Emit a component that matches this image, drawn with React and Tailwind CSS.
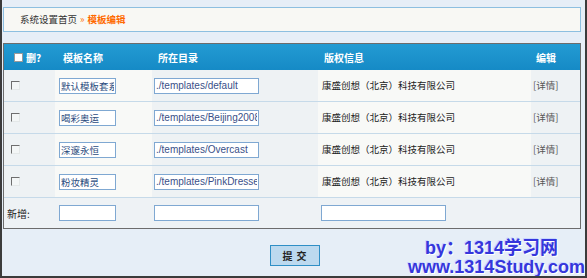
import React from "react";

const cjk = { fontFamily: '"Noto Sans CJK SC", "Liberation Sans", sans-serif' };
const arial = { fontFamily: '"Liberation Sans", "Noto Sans CJK SC", sans-serif' };

const rows = [
  { name: "默认模板套系", path: "./templates/default" },
  { name: "喝彩奥运", path: "./templates/Beijing2008" },
  { name: "深邃永恒", path: "./templates/Overcast" },
  { name: "粉妆精灵", path: "./templates/PinkDresses" },
];

function OldCheck() {
  return (
    <span className="block w-[9px] h-[9px] border-t border-l border-t-[#6e6e6e] border-l-[#6e6e6e] border-b border-r border-b-[#e4e8e8] border-r-[#e4e8e8] bg-[#f3f6f6]" />
  );
}

function Field({ value, w }) {
  return (
    <input
      readOnly
      defaultValue={value}
      className={`${w} h-[16px] border border-[#7fa8d2] bg-white px-[1px] text-[9.5px] leading-[14px] text-[#2b4c7e] outline-none`}
      style={cjk}
    />
  );
}

export default function App() {
  return (
    <div
      className="relative w-[587px] h-[278px] overflow-hidden border-l-2 border-r-2 border-b-2 border-[#3b3b3b] bg-[#e6eef7] text-[9.5px]"
      style={cjk}
    >
      <div className="pl-[1px] pt-[7px]">
        <div className="flex h-[25px] w-[578px] items-center border border-[#8dbfe0] bg-[#f8f8f4] pl-[16px] text-[9.5px] text-[#333]">
          <span>系统设置首页</span>
          <span className="ml-[3px] text-[#ff6a00]">»</span>
          <span className="ml-[3px] font-bold text-[#ff6a00]">模板编辑</span>
        </div>

        <div className="mt-[11px] w-[578px] border border-[#6c6c6c] bg-[#eef2f5]">
          {/* header */}
          <div className="flex h-[26px] items-center bg-gradient-to-b from-[#239bd3] to-[#158ac6] text-[10px] font-bold text-white">
            <div className="flex w-[51px] items-center pl-[10px]">
              <span className="block h-[9px] w-[9px] border border-[#9a9a9a] bg-white" />
              <span className="ml-[3px]">删?</span>
            </div>
            <div className="w-[97px] pl-[8px]">模板名称</div>
            <div className="w-[166px] pl-[6px]">所在目录</div>
            <div className="w-[213px] pl-[6px]">版权信息</div>
            <div className="w-[49px] pl-[5px]">编辑</div>
          </div>

          {rows.map((r) => (
            <div key={r.path} className="flex h-[32px] border-b border-[#c6dae9]">
              <div className="flex w-[51px] items-center bg-[#eef2f4] pl-[7px]">
                <OldCheck />
              </div>
              <div className="flex w-[97px] items-center bg-[#f8f9f7] pl-[4px]">
                <Field value={r.name} w="w-[57px]" />
              </div>
              <div className="flex w-[166px] items-center bg-[#eef2f4] pl-[2px]">
                <input
                  readOnly
                  defaultValue={r.path}
                  className="h-[16px] w-[105px] border border-[#7fa8d2] bg-white px-[1px] text-[10px] leading-[14px] text-[#3a4f88] outline-none"
                  style={arial}
                />
              </div>
              <div className="flex w-[213px] items-center bg-[#f8f9f7] pl-[4px] text-[#222]">
                康盛创想（北京）科技有限公司
              </div>
              <div className="flex w-[49px] items-center bg-[#eef2f4] pl-[2px] text-[#555]">
                [详情]
              </div>
            </div>
          ))}

          <div className="flex h-[30px] items-center">
            <div className="w-[51px] pl-[3px] text-[10px] text-[#222]">新增:</div>
            <div className="w-[97px] pl-[4px]">
              <Field value="" w="w-[57px]" />
            </div>
            <div className="w-[166px] pl-[2px]">
              <Field value="" w="w-[105px]" />
            </div>
            <div className="w-[213px] pl-[3px]">
              <Field value="" w="w-[125px]" />
            </div>
            <div className="w-[49px]" />
          </div>
        </div>

        <div className="mt-[16px] flex w-[583px] justify-center">
          <button className="h-[21px] w-[50px] border border-[#2f8fc6] bg-[#bcd9ef] pl-[4px] text-[10px] font-bold tracking-[4px] text-[#222]">
            提交
          </button>
        </div>
      </div>

      <div
        className="absolute left-[423px] top-[237px] whitespace-nowrap text-[18px] font-bold leading-[22px] text-[#3636dc] [text-shadow:1px_1px_0_#ffffff,-1px_-1px_0_#c8d8ff]"
        style={arial}
      >
        by：1314学习网
      </div>
      <div
        className="absolute left-[406px] top-[256px] whitespace-nowrap text-[18px] font-bold leading-[22px] text-[#3636dc] [text-shadow:1px_1px_0_#ffffff,-1px_-1px_0_#c8d8ff]"
        style={arial}
      >
        www.1314Study.com
      </div>
    </div>
  );
}
